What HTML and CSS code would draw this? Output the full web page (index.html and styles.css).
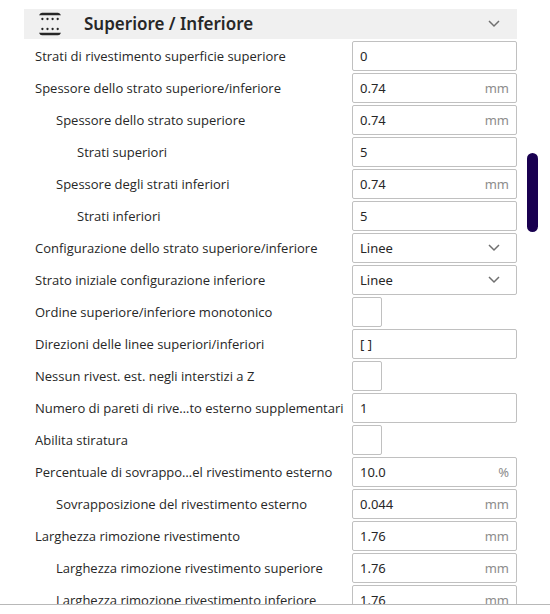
FILE: index.html
```html
<!DOCTYPE html>
<html lang="it">

<head>
  <meta charset="UTF-8">
  <meta name="viewport" content="width=device-width, initial-scale=1.0">
  <title>Superiore / Inferiore</title>
  <link rel="stylesheet" href="styles.css">
</head>

<body>
  <main class="p-panel">
    <form class="p-panel__body">
      <button class="c-category" type="button" aria-expanded="true">
        <svg class="c-category__icon" viewBox="0 0 22 24" aria-hidden="true">
          <path d="M0 3.3Q1 .7 3 .7H19Q21 .7 22 3.3ZM0 20.7H22Q21 23.3 19 23.3H3Q1 23.3 0 20.7Z" />
          <path class="c-category__dots" d="M3.4 7h0M8.5 7h0M13.6 7h0M18.7 7h0M3.4 17h0M8.5 17h0M13.6 17h0M18.7 17h0" />
        </svg>
        <span class="c-category__title">Superiore / Inferiore</span>
        <svg class="c-chevron" viewBox="0 0 12 8" aria-hidden="true"><path d="M1 1l5 5 5-5" /></svg>
      </button>

      <div class="c-setting">
        <label class="c-setting__label" for="skin-layers">Strati di rivestimento superficie superiore</label>
        <div class="c-field"><input class="c-field__input" id="skin-layers" type="text" value="0"></div>
      </div>
      <div class="c-setting">
        <label class="c-setting__label" for="thickness">Spessore dello strato superiore/inferiore</label>
        <div class="c-field"><input class="c-field__input" id="thickness" type="text" value="0.74"><span class="c-field__unit">mm</span></div>
      </div>
      <div class="c-setting c-setting--level1">
        <label class="c-setting__label" for="top-thickness">Spessore dello strato superiore</label>
        <div class="c-field"><input class="c-field__input" id="top-thickness" type="text" value="0.74"><span class="c-field__unit">mm</span></div>
      </div>
      <div class="c-setting c-setting--level2">
        <label class="c-setting__label" for="top-layers">Strati superiori</label>
        <div class="c-field"><input class="c-field__input" id="top-layers" type="text" value="5"></div>
      </div>
      <div class="c-setting c-setting--level1">
        <label class="c-setting__label" for="bottom-thickness">Spessore degli strati inferiori</label>
        <div class="c-field"><input class="c-field__input" id="bottom-thickness" type="text" value="0.74"><span class="c-field__unit">mm</span></div>
      </div>
      <div class="c-setting c-setting--level2">
        <label class="c-setting__label" for="bottom-layers">Strati inferiori</label>
        <div class="c-field"><input class="c-field__input" id="bottom-layers" type="text" value="5"></div>
      </div>
      <div class="c-setting">
        <label class="c-setting__label" for="pattern">Configurazione dello strato superiore/inferiore</label>
        <div class="c-field">
          <select class="c-field__input" id="pattern"><option>Linee</option></select>
          <svg class="c-chevron c-chevron--field" viewBox="0 0 12 8" aria-hidden="true"><path d="M1 1l5 5 5-5" /></svg>
        </div>
      </div>
      <div class="c-setting">
        <label class="c-setting__label" for="initial-pattern">Strato iniziale configurazione inferiore</label>
        <div class="c-field">
          <select class="c-field__input" id="initial-pattern"><option>Linee</option></select>
          <svg class="c-chevron c-chevron--field" viewBox="0 0 12 8" aria-hidden="true"><path d="M1 1l5 5 5-5" /></svg>
        </div>
      </div>
      <div class="c-setting">
        <label class="c-setting__label" for="monotonic">Ordine superiore/inferiore monotonico</label>
        <input class="c-check" id="monotonic" type="checkbox">
      </div>
      <div class="c-setting">
        <label class="c-setting__label" for="directions">Direzioni delle linee superiori/inferiori</label>
        <div class="c-field"><input class="c-field__input" id="directions" type="text" value="[ ]"></div>
      </div>
      <div class="c-setting">
        <label class="c-setting__label" for="no-skin">Nessun rivest. est. negli interstizi a Z</label>
        <input class="c-check" id="no-skin" type="checkbox">
      </div>
      <div class="c-setting">
        <label class="c-setting__label" for="extra-walls">Numero di pareti di rive…to esterno supplementari</label>
        <div class="c-field"><input class="c-field__input" id="extra-walls" type="text" value="1"></div>
      </div>
      <div class="c-setting">
        <label class="c-setting__label" for="ironing">Abilita stiratura</label>
        <input class="c-check" id="ironing" type="checkbox">
      </div>
      <div class="c-setting">
        <label class="c-setting__label" for="overlap-percent">Percentuale di sovrappo…el rivestimento esterno</label>
        <div class="c-field"><input class="c-field__input" id="overlap-percent" type="text" value="10.0"><span class="c-field__unit">%</span></div>
      </div>
      <div class="c-setting c-setting--level1">
        <label class="c-setting__label" for="overlap">Sovrapposizione del rivestimento esterno</label>
        <div class="c-field"><input class="c-field__input" id="overlap" type="text" value="0.044"><span class="c-field__unit">mm</span></div>
      </div>
      <div class="c-setting">
        <label class="c-setting__label" for="removal">Larghezza rimozione rivestimento</label>
        <div class="c-field"><input class="c-field__input" id="removal" type="text" value="1.76"><span class="c-field__unit">mm</span></div>
      </div>
      <div class="c-setting c-setting--level1">
        <label class="c-setting__label" for="top-removal">Larghezza rimozione rivestimento superiore</label>
        <div class="c-field"><input class="c-field__input" id="top-removal" type="text" value="1.76"><span class="c-field__unit">mm</span></div>
      </div>
      <div class="c-setting c-setting--level1">
        <label class="c-setting__label" for="bottom-removal">Larghezza rimozione rivestimento inferiore</label>
        <div class="c-field"><input class="c-field__input" id="bottom-removal" type="text" value="1.76"><span class="c-field__unit">mm</span></div>
      </div>
    </form>
    <div class="c-scrollbar" aria-hidden="true">
      <div class="c-scrollbar__thumb" style="top: 24.2%"></div>
    </div>
  </main>
</body>

</html>
```

FILE: styles.css
```css
*,
*::before,
*::after {
  margin: 0;
  box-sizing: border-box;
}

body {
  display: flex;
  flex-direction: column;
  height: 100vh;
  padding-bottom: 9px;
  overflow: hidden;
  background: #fff;
  color: #272727;
  font-family: "Noto Sans", "Open Sans", sans-serif;
  font-size: 13px;
  line-height: 18px;
}

button,
input,
select {
  color: inherit;
  font: inherit;
}

.p-panel {
  display: flex;
  flex: 1;
  min-height: 0;
  gap: 10px;
  padding: 9px 12px 0 24px;
  overflow: hidden;
  border-bottom: 1px solid #b8b8b8;
}

.p-panel__body {
  display: flex;
  flex: 1;
  flex-direction: column;
  gap: 2px;
  min-width: 0;
}

/* Category header */
.c-category {
  display: flex;
  flex: none;
  align-items: center;
  width: 100%;
  height: 30px;
  padding: 0 17px 0 15px;
  border: 0;
  background: #f0f0f0;
  text-align: left;
}

.c-category__icon {
  width: 22px;
  height: 24px;
  fill: #272727;
}

.c-category__dots {
  fill: none;
  stroke: #272727;
  stroke-width: 2.3;
  stroke-linecap: round;
}

.c-category__title {
  flex: 1;
  margin-left: 23px;
  font-size: 17px;
  font-weight: 600;
}

.c-chevron {
  flex: none;
  width: 12px;
  height: 8px;
  fill: none;
  stroke: #707070;
  stroke-width: 1.5;
}

/* Setting row */
.c-setting {
  display: grid;
  flex: none;
  grid-template-columns: minmax(0, 1fr) 165px;
  align-items: center;
  height: 30px;
  padding-left: 11px;
}

.c-setting--level1 {
  padding-left: 32px;
}

.c-setting--level2 {
  padding-left: 53px;
}

.c-setting__label {
  overflow: hidden;
  font-family: "Open Sans", "Noto Sans", sans-serif;
  white-space: nowrap;
}

.c-field {
  display: flex;
  position: relative;
  align-items: center;
  height: 30px;
  border: 1px solid #c0c0c0;
  border-radius: 2px;
}

.c-field__input {
  flex: 1;
  min-width: 0;
  height: 28px;
  padding: 0 7px;
  border: 0;
  outline: 0;
  background: none;
  appearance: none;
}

.c-field__unit {
  padding-right: 7px;
  color: #8c8c8c;
}

.c-chevron--field {
  position: absolute;
  right: 16px;
  pointer-events: none;
}

.c-check {
  width: 30px;
  height: 30px;
  border: 1px solid #c0c0c0;
  border-radius: 2px;
  background: #fff;
  appearance: none;
}

/* Scrollbar */
.c-scrollbar {
  position: relative;
  width: 11px;
}

.c-scrollbar__thumb {
  position: absolute;
  width: 100%;
  height: 79px;
  border-radius: 6px;
  background: #190050;
}
```
